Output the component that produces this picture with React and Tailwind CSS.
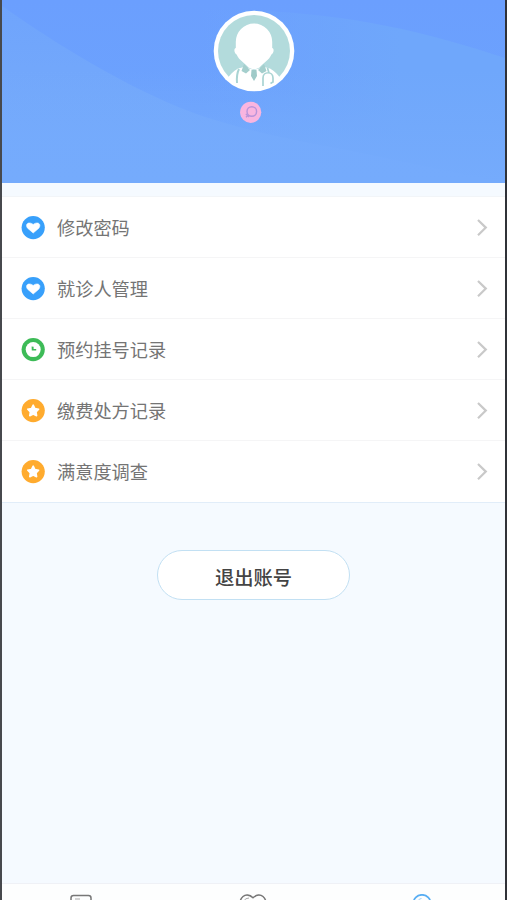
const menuItems = [
  { label: '修改密码', icon: 'heart' },
  { label: '就诊人管理', icon: 'heart' },
  { label: '预约挂号记录', icon: 'clock' },
  { label: '缴费处方记录', icon: 'star' },
  { label: '满意度调查', icon: 'star' }
];

const MenuIcon = ({ type }) => {
  if (type === 'heart') {
    return (
      <svg className="w-6 h-6" viewBox="0 0 24 24">
        <circle cx="12.2" cy="11.6" r="11.6" fill="#38a0fb" />
        <path d="M12.2 17L6.6 12.2C4.6 9.4 5.6 7 8.4 7C10.2 7 11.2 7.8 12.2 8.5C13.2 7.8 14.2 7 16 7C18.8 7 19.8 9.4 17.8 12.2Z" fill="#fff" stroke="#fff" strokeWidth="0.6" strokeLinejoin="round" />
      </svg>
    );
  }

  if (type === 'clock') {
    return (
      <svg className="w-6 h-6" viewBox="0 0 24 24">
        <circle cx="12.2" cy="11.6" r="11.6" fill="#3dbb57" />
        <circle cx="12.2" cy="11.6" r="7.5" fill="#fff" />
        <path d="M10.6 8.4L12.6 8.8V11H15.2V12.6H10.8Z" fill="#3dbb57" />
      </svg>
    );
  }

  return (
    <svg className="w-6 h-6" viewBox="0 0 24 24">
      <circle cx="12.2" cy="11.6" r="11.6" fill="#ffab2e" />
      <path d="M12.2 6.2L13.9 9.6L17.6 10.2L15 12.9L15.6 16.7L12.2 15L8.8 16.7L9.4 12.9L6.8 10.2L10.5 9.6Z" fill="#fff" stroke="#fff" strokeWidth="1.6" strokeLinejoin="round" />
    </svg>
  );
};

const Avatar = () => (
  <svg className="w-[82px] h-[82px]" viewBox="0 0 82 82">
    <defs>
      <clipPath id="avatar-clip">
        <circle cx="41" cy="41" r="38" />
      </clipPath>
    </defs>
    <circle cx="41" cy="41" r="40.3" fill="#fff" />
    <circle cx="41" cy="41" r="36" fill="#b3dbdc" />
    <g clipPath="url(#avatar-clip)">
      {/* Coat */}
      <path d="M14 69C17 65 20 61 25 58.5L31 57L41 60L51 57L57 58.5C62 61 65 65 68 69L60 82H22Z" fill="#fff" />
      <path d="M31 54L37 60L33 63.5L28.5 61ZM51 54L45 60L49 63.5L53.5 61Z" fill="#a5cfcd" />
      <path d="M38.5 60H43.5L44 66L41 71L38 66Z" fill="#9fcac8" />
      {/* Stethoscope */}
      <path d="M26 59C23.5 64 23.5 67 24 73" fill="none" stroke="#a9d4d3" strokeWidth="2" />
      <path d="M54.5 58L56 63M50 76V68C50 61 60 61 60 68V72L57.5 73.5" fill="none" stroke="#a9d4d3" strokeWidth="1.7" />
    </g>
    {/* Head */}
    <path d="M41 13.5A18.2 18.2 0 0 1 59.2 32V38C61.2 38 61.2 43 58.4 44.5C56 50.5 50 53 46.5 57.5Q41 61 35.5 57.5C32 53 26 50.5 23.6 44.5C20.8 43 20.8 38 22.8 38V32A18.2 18.2 0 0 1 41 13.5Z" fill="#fff" />
  </svg>
);

const Chevron = () => (
  <svg className="w-3 h-[18px]" viewBox="0 0 12 18" fill="none" stroke="#c9c9c9" strokeWidth="2.2">
    <path d="M2 1L9.8 8.6L2 16.2" />
  </svg>
);

const ProfileHeader = () => (
  <header className="relative h-[183px] shrink-0 overflow-hidden bg-[#6ea3fb]">
    <svg className="absolute inset-0 w-full h-full" viewBox="0 0 503 183" preserveAspectRatio="none">
      <defs>
        <linearGradient id="header-base" x1="0" y1="0" x2="0" y2="1">
          <stop offset="0" stopColor="#6b9ffe" />
          <stop offset="0.6" stopColor="#6ca2fd" />
          <stop offset="1" stopColor="#75aafc" />
        </linearGradient>
        <linearGradient id="header-right" gradientUnits="userSpaceOnUse" x1="200" y1="0" x2="400" y2="0">
          <stop offset="0" stopColor="#6fa7fb" stopOpacity="0" />
          <stop offset="1" stopColor="#6fa7fb" />
        </linearGradient>
        <linearGradient id="header-left" gradientUnits="userSpaceOnUse" x1="0" y1="0" x2="0" y2="183">
          <stop offset="0" stopColor="#6fa4fc" />
          <stop offset="0.5" stopColor="#73a8fb" />
          <stop offset="1" stopColor="#75abfd" />
        </linearGradient>
        <linearGradient id="header-bottom" gradientUnits="userSpaceOnUse" x1="0" y1="70" x2="0" y2="183">
          <stop offset="0" stopColor="#75abfc" stopOpacity="0" />
          <stop offset="1" stopColor="#75abfc" />
        </linearGradient>
      </defs>
      <rect width="503" height="183" fill="url(#header-base)" />
      <path d="M200 10C320 8 410 27 503 58V183H200Z" fill="url(#header-right)" />
      <path d="M0 6C70 55 140 95 200 116C250 132 290 140 345 150L503 183H0Z" fill="url(#header-left)" />
      <rect y="70" width="503" height="113" fill="url(#header-bottom)" />
    </svg>

    <div className="relative flex flex-col items-center pt-2.5">
      <Avatar />
      <svg className="w-[22px] h-[22px] mt-[9px] mr-[6px]" viewBox="0 0 22 22">
        <circle cx="10.7" cy="11.3" r="10.6" fill="#f9b5e0" />
        <circle cx="11.8" cy="10.5" r="4.8" fill="none" stroke="#b994d9" strokeWidth="1.4" />
        <path d="M8.4 13.8L6 16.2M5.8 12.9L9 16" fill="none" stroke="#b994d9" strokeWidth="1.3" />
      </svg>
    </div>
  </header>
);

const TabBar = () => (
  <nav className="grid h-[17px] shrink-0 grid-cols-3 justify-items-center overflow-hidden border-t border-[#eff1f6] bg-[#fdfefe] pt-[10px]">
    <svg className="mr-[9px] w-6 h-6" viewBox="0 0 24 24" fill="none" stroke="#777" strokeWidth="1.5">
      <rect x="2" y="1.5" width="20" height="20" rx="2.5" />
      <path d="M6 5H11" stroke="#aaa" strokeWidth="1" />
    </svg>
    <svg className="w-7 h-7" viewBox="0 0 28 28" fill="none" stroke="#777" strokeWidth="1.5">
      <path d="M14 25L3 13C-2 4 7-3 14 3.8C21-3 30 4 25 13Z" />
      <path d="M5 7Q6 4 10 4" stroke="#aaa" strokeWidth="1" />
    </svg>
    <svg className="ml-[2px] w-6 h-6" viewBox="0 0 24 24" fill="none" stroke="#58aef3" strokeWidth="1.7">
      <circle cx="12" cy="9.5" r="8.7" />
      <path d="M8 7Q9 4.5 11.5 4.5" stroke="#9bd0fa" strokeWidth="1" />
    </svg>
  </nav>
);

export default function App() {
  return (
    <div className="flex h-[900px] w-[507px] flex-col overflow-hidden border-l-2 border-r-2 border-l-[#47494d] border-r-[#303238] bg-[#f5faff] font-['Noto_Sans_CJK_SC',sans-serif]">
      <ProfileHeader />

      {/* Menu list */}
      <ul className="mt-[13px] shrink-0 border-t border-b border-t-[#f2f5f8] border-b-[#e1edf9] bg-white">
        {menuItems.map((item) => (
          <li
            key={item.label}
            className="flex h-[61px] items-center border-b border-[#f5f5f6] pt-px pl-[19px] pr-[17px] last:border-transparent"
          >
            <MenuIcon type={item.icon} />
            <span className="mb-0.5 ml-3 text-[18.2px] leading-6 text-[#747474]">{item.label}</span>
            <span className="ml-auto">
              <Chevron />
            </span>
          </li>
        ))}
      </ul>

      <main className="flex flex-1 justify-center pt-[47px]">
        <button className="h-[50px] w-[193px] rounded-full border-[1.5px] border-[#c2e0f3] bg-white pt-[5px] text-[19.3px] font-medium text-[#444]">
          退出账号
        </button>
      </main>

      <TabBar />
    </div>
  );
}
